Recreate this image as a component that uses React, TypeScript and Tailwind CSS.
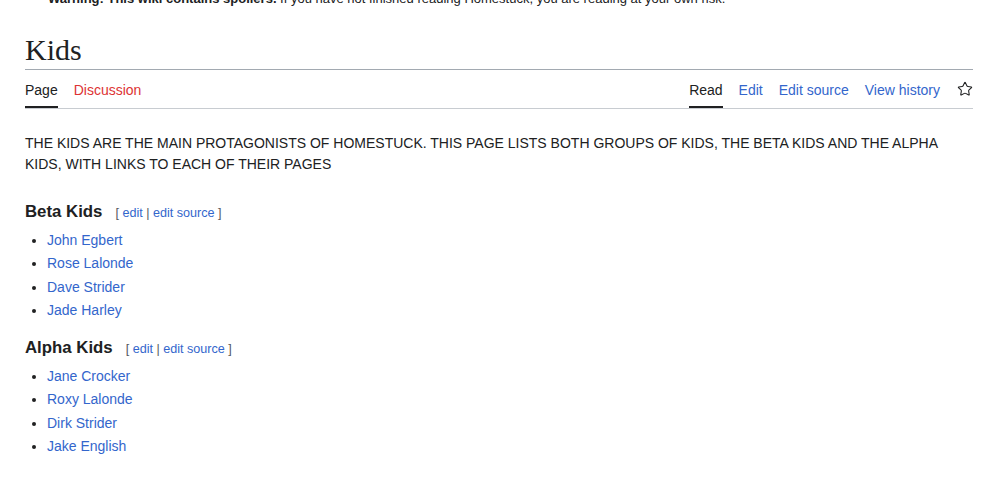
import { Star } from "lucide-react"

const beta = ["John Egbert", "Rose Lalonde", "Dave Strider", "Jade Harley"]
const alpha = ["Jane Crocker", "Roxy Lalonde", "Dirk Strider", "Jake English"]

function Section({ title, items }: { title: string; items: string[] }) {
    return (
        <div>
            <div className="flex items-baseline">
                <h3 className="text-[16.8px] font-bold leading-[25px] text-[#202122]">{title}</h3>
                <span className="ml-[13px] text-[12.6px] text-[#54595d]">
                    [ <a className="text-[#3366cc]">edit</a> | <a className="text-[#3366cc]">edit source</a> ]
                </span>
            </div>
            <ul className="mt-[5px] ml-[22px] list-disc marker:text-[#202122]">
                {items.map(name => (
                    <li key={name} className="mb-[1px] pl-0 text-[14px] leading-[22.3px]">
                        <a className="text-[#3366cc]">{name}</a>
                    </li>
                ))}
            </ul>
        </div>
    )
}

export default function App() {
    return (
        <div className="min-h-[491px] bg-white font-['Liberation_Sans',Arial,sans-serif] text-[#202122] overflow-hidden">
            <div className="px-[25px] pr-[17px]">
                {/* spoiler notice, cut off by the top edge */}
                <p className="mt-[-10px] ml-[23px] text-[13px] leading-[18px]">
                    <b>Warning: This wiki contains spoilers.</b> If you have not finished reading Homestuck, you are reading at your own risk.
                </p>

                {/* TITLE */}
                <h1 className="mt-[24px] font-['Liberation_Serif','Times_New_Roman',serif] text-[30px] leading-[36px] pb-[1px] border-b border-[#a2a9b1]">
                    Kids
                </h1>

                {/* TABS */}
                <div className="flex justify-between border-b border-[#c8ccd1] text-[14px] h-[39px]">
                    <div className="flex gap-[16px]">
                        <span className="pt-[10px] border-b-2 border-[#202122]">Page</span>
                        <span className="pt-[10px] text-[#d33]">Discussion</span>
                    </div>
                    <div className="flex gap-[16px]">
                        <span className="pt-[10px] border-b-2 border-[#202122]">Read</span>
                        <span className="pt-[10px] text-[#3366cc]">Edit</span>
                        <span className="pt-[10px] text-[#3366cc]">Edit source</span>
                        <span className="pt-[10px] text-[#3366cc]">View history</span>
                        <span className="pt-[11px] pl-[1px]">
                            <Star size={16} strokeWidth={1.6} className="text-[#202122]" />
                        </span>
                    </div>
                </div>

                {/* BODY - the reference paragraph is vandalism (slurs / sexual content); neutral placeholder of the same shape */}
                <p className="mt-[24px] text-[14px] leading-[21px] pr-[20px]">
                    THE KIDS ARE THE MAIN PROTAGONISTS OF HOMESTUCK. THIS PAGE LISTS BOTH GROUPS OF KIDS, THE BETA KIDS AND THE
                    ALPHA KIDS, WITH LINKS TO EACH OF THEIR PAGES
                </p>

                <div className="mt-[24px] flex flex-col gap-[13px]">
                    <Section title="Beta Kids" items={beta} />
                    <Section title="Alpha Kids" items={alpha} />
                </div>
            </div>
        </div>
    )
}
